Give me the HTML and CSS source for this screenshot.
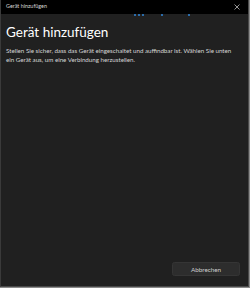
FILE: index.html
```html
<!DOCTYPE html>
<html lang="de">
<head>
<meta charset="utf-8">
<link rel="stylesheet" href="styles.css">
</head>
<body>
<div class="window">
  <div class="titlebar">
    <span class="title">Gerät hinzufügen</span>
    <svg class="close" width="6" height="6" viewBox="0 0 6 6"><path d="M0.5 0.5L5.5 5.5M5.5 0.5L0.5 5.5" stroke="#bdbdbd" stroke-width="0.8"/></svg>
  </div>
  <div class="progress">
    <span class="dot" style="left:133px"></span>
    <span class="dot" style="left:137px"></span>
    <span class="dot" style="left:141px"></span>
    <span class="dot" style="left:160px"></span>
    <span class="dot" style="left:187px"></span>
  </div>
  <div class="content">
    <h1 class="heading">Gerät hinzufügen</h1>
    <p class="text">Stellen Sie sicher, dass das Gerät eingeschaltet und auffindbar ist. Wählen Sie unten ein Gerät aus, um eine Verbindung herzustellen.</p>
    <div class="spacer"></div>
    <div class="footer">
      <button class="btn">Abbrechen</button>
    </div>
  </div>
</div>
</body>
</html>
```
FILE: styles.css
```css
html, body {
  margin: 0;
  padding: 0;
  background: #8a8a8a;
}
body {
  width: 250px;
  height: 288px;
  font-family: "Lato", "Open Sans", sans-serif;
}
.window {
  box-sizing: border-box;
  width: 249px;
  height: 287px;
  display: flex;
  flex-direction: column;
  background: #202020;
  border-left: 1px solid #3a3a3a;
  border-right: 1px solid #4a4a4a;
  border-bottom: 1px solid #4a4a4a;
  position: relative;
}
.titlebar {
  height: 14px;
  background: #000;
  display: flex;
  align-items: center;
  justify-content: space-between;
  padding: 0 8px 0 5px;
  flex-shrink: 0;
}
.title {
  color: #d8d8d8;
  font-size: 5.4px;
  line-height: 1;
}
.close {
  display: block;
}
.progress {
  position: relative;
  height: 0;
}
.dot {
  position: absolute;
  top: 0;
  width: 2px;
  height: 2px;
  border-radius: 50%;
  background: #2f86d8;
}
.content {
  flex: 1;
  display: flex;
  flex-direction: column;
  padding: 10px 8px 10px 5px;
}
.heading {
  margin: 0;
  color: #ffffff;
  font-size: 13.5px;
  font-weight: 400;
  line-height: 16px;
}
.text {
  margin: 6px 0 0;
  color: #d6d6d6;
  font-size: 6.2px;
  line-height: 9px;
}
.spacer {
  flex: 1;
}
.footer {
  display: flex;
  justify-content: flex-end;
}
.btn {
  width: 68px;
  height: 14px;
  background: #2d2d2d;
  border: 1px solid #353535;
  border-radius: 2.5px;
  color: #cfcfcf;
  font-family: "Lato", "Open Sans", sans-serif;
  font-size: 6.3px;
  padding: 0;
}
```
